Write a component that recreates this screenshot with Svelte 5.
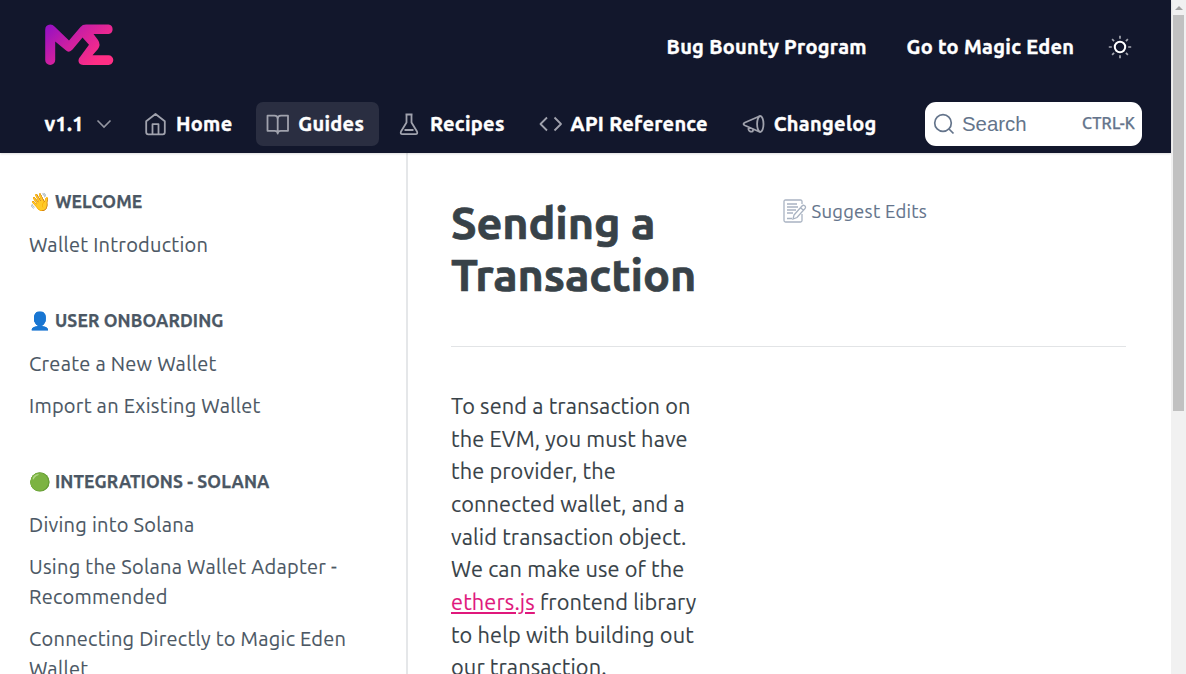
<script>
  const nav = [
    { label: 'Home', icon: 'home' },
    { label: 'Guides', icon: 'book', active: true },
    { label: 'Recipes', icon: 'flask' },
    { label: 'API Reference', icon: 'code' },
    { label: 'Changelog', icon: 'horn' }
  ];

  const sections = [
    { emoji: '👋', title: 'WELCOME', links: ['Wallet Introduction'] },
    { emoji: '👤', title: 'USER ONBOARDING', links: ['Create a New Wallet', 'Import an Existing Wallet'] },
    {
      emoji: '🟢', title: 'INTEGRATIONS - SOLANA',
      links: ['Diving into Solana', 'Using the Solana Wallet Adapter - Recommended', 'Connecting Directly to Magic Eden Wallet']
    }
  ];
</script>

<div class="page">
  <div class="view">
    <header>
      <div class="top">
        <svg class="logo" viewBox="0 0 70 42" width="70" height="42">
          <defs>
            <linearGradient id="brand" gradientUnits="userSpaceOnUse" x1="4" y1="0" x2="46" y2="44">
              <stop offset="0" stop-color="#9410c4" />
              <stop offset=".5" stop-color="#d020a0" />
              <stop offset="1" stop-color="#ff2e85" />
            </linearGradient>
          </defs>
          <path d="M1.200 6Q1.200.8 6.300.6Q8.800.6 10.500 2.500L25 16.500 36.500 3Q38.500.6 42 .6H64.500a4.800 4.800 0 0 1 0 9.500H49.500L54 16q3 4.500 0 9L48.500 31.300H64.500a4.800 4.800 0 0 1 0 9.600H39.500c-4.800 0-6.500-4.500-3.500-8L45 20.700 38.500 13.500 28.500 25.500Q25 29.500 21.500 26L11.200 17.500V36a5 5 0 0 1-10 0z" fill="url(#brand)" />
        </svg>
        <div class="toplinks">
          <a href="#bounty">Bug Bounty Program</a>
          <a href="#eden">Go to Magic Eden</a>
          <svg class="sun" viewBox="0 0 24 24" width="24" height="24" fill="none">
            <circle cx="12" cy="12" r="5.200" stroke="#fff" stroke-width="2" />
            <path d="M12 .8v3M12 20.200v3M.8 12h3M20.200 12h3M4.100 4.100l2 2M17.900 17.900l2 2M4.100 19.900l2-2M17.900 6.100l2-2" stroke="#a3a5ae" stroke-width="1.700" />
          </svg>
        </div>
      </div>
      <div class="bar">
        <div class="version">
          <span class="label">v1.1</span>
          <svg viewBox="0 0 16 10" width="16" height="10"><path d="M1.500 1.500 8 8l6.500-6.500" fill="none" stroke="#9496a1" stroke-width="1.600" /></svg>
        </div>
        <nav>
          {#each nav as item}
            <a href="#{item.icon}" class="item" class:active={item.active}>
              <svg viewBox="0 0 24 24" width="24" height="24">
                {#if item.icon === 'home'}
                  <path d="M2.200 9.300 11.500 2l9.300 7.300v11q0 2-2 2H4.200q-2 0-2-2zM8.500 22v-9.800h6V22" />
                {:else if item.icon === 'book'}
                  <path d="M1.500 3.700h7Q11.700 3.700 11.700 7v14.500q0-2.700-3-2.700H1.500zM22 3.700h-7Q11.700 3.700 11.700 7v14.500q0-2.700 3-2.700h7.300z" />
                {:else if item.icon === 'flask'}
                  <path d="M7.500 2.500h7M8.500 2.500v8L3 19.500Q2 22.200 4.500 22.200h13q2.500 0 1.500-2.700L13.500 10.500v-8M6.500 18h9" />
                {:else if item.icon === 'code'}
                  <path d="M8 5.500 1.500 12 8 18.500M15.500 5.500 22 12l-6.500 6.500" />
                {:else}
                  <path d="M18 4 3 10.500q-3 1.500 0 3L18 20M6.500 15.200v2.300q1 3 4.200 1.800l.5-2" />
                  <ellipse cx="18.300" cy="12" rx="3.200" ry="8" />
                {/if}
              </svg>
              <span class="label">{item.label}</span>
            </a>
          {/each}
        </nav>
        <div class="search">
          <svg viewBox="0 0 22 22" width="22" height="22" fill="none" stroke="#64748b" stroke-width="1.700"><circle cx="10" cy="10" r="8.300" /><path d="m16 16 4.500 4.500" /></svg>
          <span class="hint">Search</span>
          <span class="keys">CTRL-K</span>
        </div>
      </div>
    </header>

    <div class="body">
      <aside>
        {#each sections as section}
          <section>
            <h2><span class="emoji">{section.emoji}</span>{section.title}</h2>
            <ul>
              {#each section.links as link}
                <li><a href="#doc">{link}</a></li>
              {/each}
            </ul>
          </section>
        {/each}
      </aside>
      <main>
        <div class="heading">
          <h1>Sending a Transaction</h1>
          <a class="edit" href="#edit">
            <svg viewBox="0 0 24 24" width="24" height="24" fill="none" stroke="#a9b3c2" stroke-width="1.300">
              <path d="M19 5V2.500Q19 1 17.500 1h-15Q1 1 1 2.500v19Q1 23 2.500 23h15q1.500 0 1.500-1.500V15" />
              <path d="M4 5h10M4 8h11M4 11h9M4 14h6M4 19.500h5" />
              <path d="m11 16 8-9q1.200-1.400 2.700-.2t.3 2.700l-8 9-4 1.500zM17.500 8.700l3 2.600" />
            </svg>
            <span>Suggest Edits</span>
          </a>
        </div>
        <p>
          To send a transaction on the EVM, you must have the provider, the connected wallet, and a valid
          transaction object. We can make use of the <a href="#ethers">ethers.js</a> frontend library to help
          with building out our transaction.
        </p>
      </main>
    </div>
  </div>
  <div class="scroll"><i class="arrow"></i><i class="thumb"></i></div>
</div>

<style>
  :global(body) { margin: 0; overflow: hidden; }
  .page { display: flex; width: 1186px; height: 674px; overflow: hidden; background: #fff; font-family: Ubuntu, "Noto Sans", sans-serif; }
  .page * { box-sizing: border-box; }
  a { color: inherit; text-decoration: none; }
  .view { width: 1171px; display: flex; flex-direction: column; }
  header { flex: none; height: 153px; background: #12172c; color: #fff; font-size: 20px; letter-spacing: .29px; font-weight: 700; white-space: nowrap; box-shadow: 0 1px 2px #0002; z-index: 1; }
  .top { display: flex; justify-content: space-between; height: 94px; padding: 0 38.700px 0 44px; }
  .logo { margin-top: 24px; }
  .toplinks { display: flex; align-items: center; }
  .toplinks a { margin-right: 39.700px; padding-bottom: 2px; -webkit-text-stroke: .4px; }
  .toplinks a:nth-child(2) { margin-right: 34px; }
  .bar { display: flex; height: 59px; padding: 8px 29px 7px 44px; }
  .label { padding-bottom: 2px; -webkit-text-stroke: .4px; }
  .version { display: flex; align-items: center; gap: 12.500px; width: 90px; padding-left: .5px; flex: none; }
  nav { display: flex; gap: 9px; width: 791px; flex: none; }
  .item { display: flex; align-items: center; gap: 8px; padding: 0 14.900px 0 10px; border-radius: 7px; flex: none; }
  .item svg { fill: none; stroke: #a0a2ad; stroke-width: 1.800; stroke-linejoin: round; }
  .active { background: #2a2e41; }
  .search { width: 217px; height: 44px; display: flex; align-items: center; padding: 0 7px 0 8px; border-radius: 11px; background: #fff; color: #64748b; font-family: "Liberation Sans", sans-serif; font-weight: 400; font-size: 20.400px; letter-spacing: 0; }
  .hint { margin-left: 7px; }
  .keys { margin-left: auto; font: 500 16px Ubuntu, "Noto Sans", sans-serif; letter-spacing: .1px; padding-bottom: 2px; -webkit-text-stroke: .25px; }
  .body { display: flex; flex: 1; min-height: 0; }
  aside { width: 408px; flex: none; border-right: 2px solid #e5e7e9; padding: 34px 50px 0 29px; color: #4b5764; font-size: 20px; line-height: 30px; letter-spacing: .26px; overflow: hidden; -webkit-text-stroke: .12px; }
  section { margin-bottom: 39px; }
  h2 { display: flex; align-items: center; height: 30px; margin: 0 0 7px; font-size: 17.500px; letter-spacing: .1px; font-weight: 700; white-space: nowrap; -webkit-text-stroke: .25px; }
  section + section { margin-top: 40px; }
  .emoji { width: 26px; font-size: 17.500px; flex: none; font-family: "Noto Color Emoji", sans-serif; }
  ul { list-style: none; margin: 0; padding: 0; }
  li { padding: 6px 0; }
  main { padding: 44px 45px 0 43px; flex: 1; color: #384248; overflow: hidden; }
  .heading { display: flex; height: 150px; margin-left: -.5px; padding-left: .5px; border-bottom: 1px solid #e2e4e6; }
  h1 { width: 332px; margin: 0; padding-right: 70px; font-size: 45px; letter-spacing: -.1px; line-height: 52px; font-weight: 700; -webkit-text-stroke: .7px; }
  .edit { display: flex; align-items: center; gap: 4.500px; height: 28px; color: #64748b; font-size: 18.500px; letter-spacing: .27px; -webkit-text-stroke: .12px; }
  p { width: 254px; margin: 43.200px 0 0; font-size: 21.760px; letter-spacing: .12px; line-height: 32.640px; -webkit-text-stroke: .12px; }
  p a { color: #e0187c; text-decoration: underline; }
  .scroll { width: 15px; background: #f1f1f1; display: flex; flex-direction: column; align-items: center; padding-top: 6px; }
  .arrow { border: 4px solid transparent; border-top: 0; border-bottom: 4px solid #a3a3a3; }
  .thumb { width: 11px; height: 396px; margin-top: 5px; background: #c1c1c1; }
</style>
